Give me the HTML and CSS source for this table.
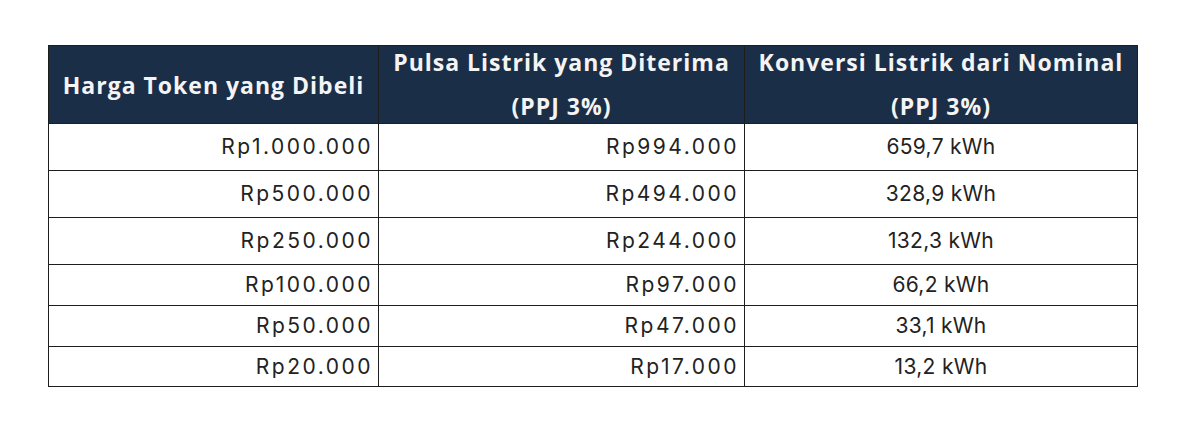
FILE: index.html
```html
<!DOCTYPE html>
<html lang="id">
<head>
<meta charset="utf-8">
<title>Harga Token Listrik</title>
<link rel="stylesheet" href="styles.css">
</head>
<body>
<table class="token-table">
  <colgroup>
    <col class="c1">
    <col class="c2">
    <col class="c3">
  </colgroup>
  <thead>
    <tr class="head-row">
      <th><div class="hcell">Harga Token yang Dibeli</div></th>
      <th><div class="hcell two">Pulsa Listrik yang Diterima<br>(PPJ 3%)</div></th>
      <th><div class="hcell two">Konversi Listrik dari Nominal<br>(PPJ 3%)</div></th>
    </tr>
  </thead>
  <tbody>
    <tr class="tall"><td class="num">Rp1.000.000</td><td class="num">Rp994.000</td><td class="kwh">659,7 kWh</td></tr>
    <tr class="tall"><td class="num">Rp500.000</td><td class="num">Rp494.000</td><td class="kwh">328,9 kWh</td></tr>
    <tr class="tall"><td class="num">Rp250.000</td><td class="num">Rp244.000</td><td class="kwh">132,3 kWh</td></tr>
    <tr class="short"><td class="num">Rp100.000</td><td class="num">Rp97.000</td><td class="kwh">66,2 kWh</td></tr>
    <tr class="short"><td class="num">Rp50.000</td><td class="num">Rp47.000</td><td class="kwh">33,1 kWh</td></tr>
    <tr class="shorter"><td class="num">Rp20.000</td><td class="num">Rp17.000</td><td class="kwh">13,2 kWh</td></tr>
  </tbody>
</table>
</body>
</html>
```

FILE: styles.css
```css
html, body {
  margin: 0;
  padding: 0;
  background: #ffffff;
}

body {
  padding: 45px 0 0 48px;
  font-family: "Open Sans", "Noto Sans", sans-serif;
}

.token-table {
  border-collapse: collapse;
  table-layout: fixed;
  width: 1089px;
}

.c1 { width: 330px; }
.c2 { width: 366px; }
.c3 { width: 393px; }

.token-table th,
.token-table td {
  border: 1px solid #1e1e1e;
  padding: 0 5px;
}

.token-table th {
  background: #1b2e47;
  color: #f4f4f4;
  font-weight: 700;
  font-size: 23px;
  letter-spacing: 1px;
  text-align: center;
  vertical-align: middle;
  padding: 0;
}

.hcell {
  box-sizing: border-box;
  height: 77px;
  display: flex;
  flex-direction: column;
  justify-content: center;
  line-height: 40px;
}

.hcell.two {
  line-height: 44px;
  padding-bottom: 2px;
}

.token-table td {
  font-family: "Inter", "Open Sans", sans-serif;
  font-size: 21px;
  letter-spacing: 2.5px;
  color: #222222;
  vertical-align: middle;
  line-height: 26px;
}

.tall { height: 47px; }
.short { height: 41px; }
.shorter { height: 40px; }

.token-table .num { text-align: right; }
.token-table .kwh {
  text-align: center;
  letter-spacing: 0.3px;
}
```
